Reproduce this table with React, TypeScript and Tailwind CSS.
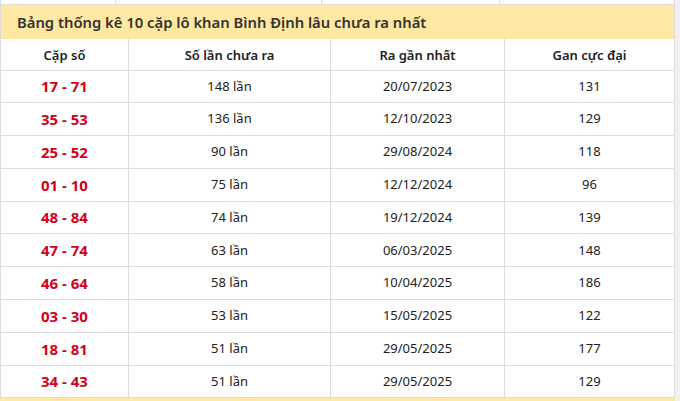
const rows = [
  ['17 - 71', '148 lần', '20/07/2023', '131'],
  ['35 - 53', '136 lần', '12/10/2023', '129'],
  ['25 - 52', '90 lần', '29/08/2024', '118'],
  ['01 - 10', '75 lần', '12/12/2024', '96'],
  ['48 - 84', '74 lần', '19/12/2024', '139'],
  ['47 - 74', '63 lần', '06/03/2025', '148'],
  ['46 - 64', '58 lần', '10/04/2025', '186'],
  ['03 - 30', '53 lần', '15/05/2025', '122'],
  ['18 - 81', '51 lần', '29/05/2025', '177'],
  ['34 - 43', '51 lần', '29/05/2025', '129'],
]

export default function App() {
  return (
    <div className="flex h-[401px] w-[680px] overflow-hidden bg-[#f0f0f0] font-['Noto_Sans',sans-serif] text-[#222]">
      <div className="flex w-[675px] flex-col bg-white">
        {/* tail of the previous table */}
        <div className="grid h-[5px] shrink-0 grid-cols-[115px_206px_178px_1fr] border-b border-l border-r border-[#dddddd]">
          <div className="border-r border-[#dddddd]" />
          <div className="border-r border-[#dddddd]" />
          <div className="border-r border-[#dddddd]" />
          <div />
        </div>

        <div className="flex h-[34px] shrink-0 items-center border-l border-r border-[#dddddd] bg-[#ffe8a1] pl-[16px] text-[14.8px] font-semibold text-[#333]">
          Bảng thống kê 10 cặp lô khan Bình Định lâu chưa ra nhất
        </div>

        <table className="w-full shrink-0 table-fixed border-collapse text-center text-[13px]">
          <colgroup>
            <col className="w-[128px]" />
            <col className="w-[202px]" />
            <col className="w-[174px]" />
            <col />
          </colgroup>
          <thead>
            <tr className="h-[31px]">
              {['Cặp số', 'Số lần chưa ra', 'Ra gần nhất', 'Gan cực đại'].map((h) => (
                <th key={h} className="border border-t-0 border-[#dddddd] pt-[3px] font-semibold text-[#222]">
                  {h}
                </th>
              ))}
            </tr>
          </thead>
          <tbody>
            {rows.map((r) => (
              <tr key={r[0]} className="h-[32.8px]">
                <td className="border border-[#dddddd] text-[15px] font-bold text-[#d0021b]">{r[0]}</td>
                <td className="border border-[#dddddd]">{r[1]}</td>
                <td className="border border-[#dddddd]">{r[2]}</td>
                <td className="border border-[#dddddd]">{r[3]}</td>
              </tr>
            ))}
          </tbody>
        </table>
        <div className="h-[6px] shrink-0 bg-[#ffe8a1]" />
      </div>
    </div>
  )
}
